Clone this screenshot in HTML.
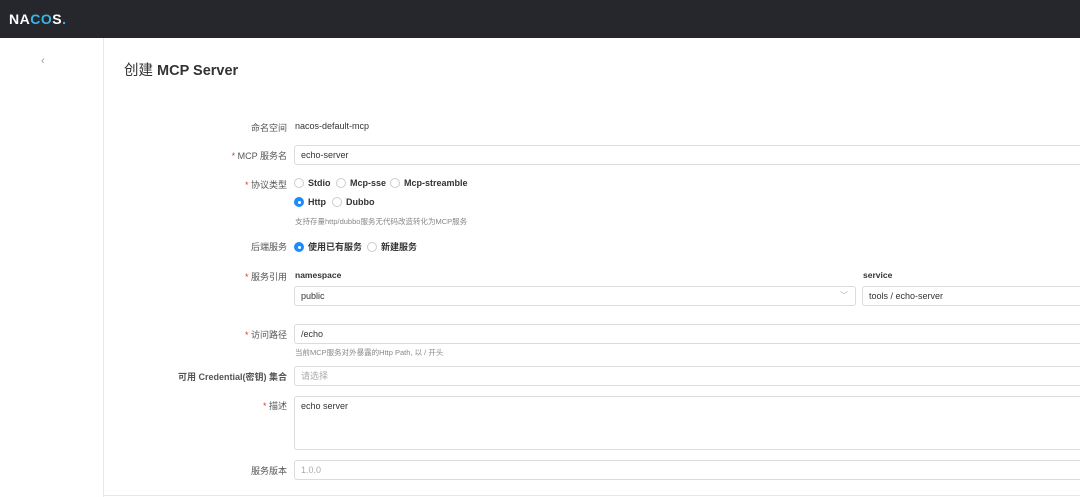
<!DOCTYPE html>
<html><head><meta charset="utf-8"><style>
*{box-sizing:border-box;margin:0;padding:0}
body{width:1080px;height:497px;overflow:hidden;background:#fff;font-family:"Liberation Sans","Noto Sans CJK SC",sans-serif;font-size:9px;color:#333;position:relative}
.hd{position:absolute;left:0;top:0;width:1080px;height:38px;background:#25272c}
.logo{position:absolute;left:9px;top:11px;color:#fff;font-weight:bold;font-size:14px;letter-spacing:0.5px}
.side{position:absolute;left:0;top:38px;width:104px;height:459px;border-right:1px solid #e8e8e8}
.a{position:absolute}
.lbl{position:absolute;right:793px;text-align:right;color:#555;white-space:nowrap}
.req:before{content:"* ";color:#e33}
.in{position:absolute;border:1px solid #dcdcdc;border-radius:3px;height:20px;padding:0 6px;line-height:18px;color:#333;background:#fff}
.ph{color:#aaa}
.rd{position:absolute;white-space:nowrap;font-weight:bold;color:#333}
.rd i{display:inline-block;width:10px;height:10px;border:1px solid #ccc;border-radius:50%;vertical-align:-2px;margin-right:4px;background:#fff}
.rd i.on{background:#1a8cff;border-color:#1a8cff;position:relative}
.rd i.on:after{content:"";position:absolute;left:2.5px;top:2.5px;width:3px;height:3px;border-radius:50%;background:#fff}
.help{position:absolute;color:#888;font-size:7.5px}
</style></head><body>
<div class="hd"><div class="logo">NA<span style="color:#3bb4e8">CO</span>S<span style="color:#3bb4e8">.</span></div></div>
<div class="side"><div class="a" style="left:41px;top:17px;color:#999;font-size:11px">‹</div></div>
<div class="a" style="left:124px;top:59px;font-size:14.5px;color:#333">创建 <b>MCP Server</b></div>

<div class="lbl" style="top:121px">命名空间</div>
<div class="a" style="left:295px;top:121px">nacos-default-mcp</div>

<div class="lbl req" style="top:149px">MCP 服务名</div>
<div class="in" style="left:294px;top:145px;width:800px">echo-server</div>

<div class="lbl req" style="top:178px">协议类型</div>
<div class="rd" style="left:294px;top:178px"><i></i>Stdio</div>
<div class="rd" style="left:336px;top:178px"><i></i>Mcp-sse</div>
<div class="rd" style="left:390px;top:178px"><i></i>Mcp-streamble</div>
<div class="rd" style="left:294px;top:197px"><i class="on"></i>Http</div>
<div class="rd" style="left:332px;top:197px"><i></i>Dubbo</div>
<div class="help" style="left:295px;top:216px">支持存量http/dubbo服务无代码改造转化为MCP服务</div>

<div class="lbl" style="top:240px">后端服务</div>
<div class="rd" style="left:294px;top:240px"><i class="on"></i>使用已有服务</div>
<div class="rd" style="left:367px;top:240px"><i></i>新建服务</div>

<div class="lbl req" style="top:270px">服务引用</div>
<div class="a" style="left:295px;top:270px;font-weight:bold;font-size:8.5px">namespace</div>
<div class="a" style="left:863px;top:270px;font-weight:bold;font-size:8.5px">service</div>
<div class="in" style="left:294px;top:286px;width:562px">public<span style="position:absolute;right:7px;top:0;color:#aaa;font-size:8px">﹀</span></div>
<div class="in" style="left:862px;top:286px;width:240px">tools / echo-server</div>

<div class="lbl req" style="top:328px">访问路径</div>
<div class="in" style="left:294px;top:324px;width:800px">/echo</div>
<div class="help" style="left:295px;top:347px">当前MCP服务对外暴露的Http Path, 以 / 开头</div>

<div class="lbl" style="top:370px;font-weight:bold">可用 Credential(密钥) 集合</div>
<div class="in ph" style="left:294px;top:366px;width:800px">请选择</div>

<div class="lbl req" style="top:399px">描述</div>
<div class="in" style="left:294px;top:396px;width:800px;height:54px">echo server</div>

<div class="lbl" style="top:464px">服务版本</div>
<div class="in ph" style="left:294px;top:460px;width:800px">1.0.0</div>
<div class="a" style="left:104px;top:495px;width:976px;height:1px;background:#e8e8e8"></div>
</body></html>
